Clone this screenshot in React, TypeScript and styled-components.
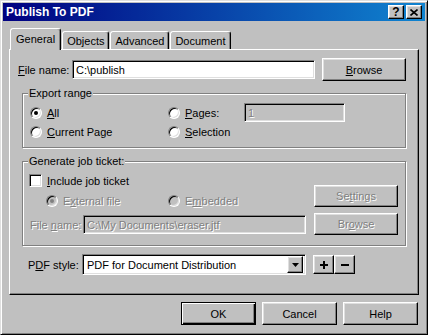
import React from "react";
import styled, { createGlobalStyle, css } from "styled-components";

const GlobalStyle = createGlobalStyle`
  html, body {
    margin: 0;
    padding: 0;
    background: #c0c0c0;
  }
  body {
    font-family: "Liberation Sans", Arial, sans-serif;
    font-size: 11px;
    color: #000;
  }
  * {
    box-sizing: border-box;
  }
`;

const raised = css`
  border: 1px solid;
  border-color: #fff #000 #000 #fff;
  box-shadow: inset -1px -1px #808080, inset 1px 1px #dfdfdf;
`;

const sunken = css`
  border: 1px solid;
  border-color: #808080 #fff #fff #808080;
  box-shadow: inset 1px 1px #000, inset -1px -1px #dfdfdf;
`;

const disabledText = css`
  color: #808080;
  text-shadow: 1px 1px #fff;
`;

const Window = styled.div`
  width: 428px;
  height: 335px;
  display: flex;
  flex-direction: column;
  background: #c0c0c0;
  border: 1px solid;
  border-color: #dfdfdf #000 #000 #dfdfdf;
  box-shadow: inset 1px 1px #fff, inset -1px -1px #808080;
  padding: 2px;
`;

const TitleBar = styled.div`
  height: 18px;
  display: flex;
  align-items: center;
  justify-content: space-between;
  padding: 0 3px 0 3px;
  background: linear-gradient(90deg, #000080, #1084d0);
  color: #fff;
  font-weight: bold;
  font-size: 12px;
`;

const CaptionButtons = styled.div`
  display: flex;
  gap: 2px;
`;

const CaptionButton = styled.div`
  width: 16px;
  height: 14px;
  background: #c0c0c0;
  ${raised};
  display: flex;
  align-items: center;
  justify-content: center;
  color: #000;
  font-size: 12px;
  font-weight: bold;
  line-height: 12px;
`;

const Content = styled.div`
  flex: 1;
  display: flex;
  flex-direction: column;
  padding: 7px 6px 0 6px;
`;

const TabStrip = styled.div`
  display: flex;
  align-items: flex-end;
  height: 21px;
  padding-left: 1px;
`;

const Tab = styled.div<{ $active?: boolean }>`
  height: 18px;
  padding: 0 4px;
  display: flex;
  align-items: center;
  background: #c0c0c0;
  border: 1px solid;
  border-bottom: none;
  border-color: #fff #000 transparent #fff;
  border-radius: 3px 3px 0 0;
  box-shadow: inset -1px 0 #808080;
  margin-right: 1px;
  ${(p) =>
    p.$active &&
    css`
      position: relative;
      z-index: 1;
      height: 22px;
      margin-bottom: -1px;
      padding: 0 5px 2px 5px;
    `}
`;

const Panel = styled.div`
  height: 246px;
  display: flex;
  flex-direction: column;
  border: 1px solid;
  border-color: #fff #000 #000 #fff;
  box-shadow: inset -1px -1px #808080;
`;

const FileRow = styled.div`
  display: flex;
  align-items: center;
  height: 23px;
  margin: 8px 12px 0 8px;
`;

const Label = styled.span<{ $width: number; $disabled?: boolean }>`
  width: ${(p) => p.$width}px;
  flex: none;
  white-space: nowrap;
  ${(p) => p.$disabled && disabledText};
`;

const Field = styled.div<{ $width: number; $height?: number; $disabled?: boolean }>`
  width: ${(p) => p.$width}px;
  height: ${(p) => p.$height ?? 19}px;
  flex: none;
  display: flex;
  align-items: center;
  padding: 0 3px;
  white-space: nowrap;
  overflow: hidden;
  background: ${(p) => (p.$disabled ? "#c0c0c0" : "#fff")};
  ${sunken};
  ${(p) => p.$disabled && disabledText};
`;

const PushButton = styled.div<{ $width: number; $height: number; $default?: boolean; $disabled?: boolean }>`
  width: ${(p) => p.$width}px;
  height: ${(p) => p.$height}px;
  flex: none;
  display: flex;
  align-items: center;
  justify-content: center;
  background: #c0c0c0;
  ${raised};
  ${(p) =>
    p.$default &&
    css`
      border-color: #000;
      box-shadow: inset 1px 1px #fff, inset -1px -1px #000, inset -2px -2px #808080;
    `}
  ${(p) => p.$disabled && disabledText};
`;

const Group = styled.fieldset<{ $top: number }>`
  margin: ${(p) => p.$top}px 12px 0 12px;
  padding: 0;
  min-width: 0;
  border: 1px solid #808080;
  box-shadow: inset 1px 1px #fff, 1px 1px #fff;
`;

const Legend = styled.legend`
  margin-left: 5px;
  padding: 0 1px;
  line-height: 13px;
  background: #c0c0c0;
`;

const RangeGrid = styled.div`
  display: grid;
  grid-template-columns: 138px 1fr;
  grid-auto-rows: 19px;
  align-items: center;
  padding: 3px 8px 6px 7px;
`;

const PagesCell = styled.div`
  display: flex;
  align-items: center;
`;

const Option = styled.div<{ $width?: number; $disabled?: boolean }>`
  display: flex;
  align-items: center;
  gap: 5px;
  white-space: nowrap;
  ${(p) => p.$width && `width: ${p.$width}px;`}
  ${(p) => p.$disabled && disabledText};
`;

const Radio = styled.span<{ $checked?: boolean; $disabled?: boolean }>`
  width: 12px;
  height: 12px;
  flex: none;
  border-radius: 50%;
  border: 1px solid;
  border-color: #808080 #fff #fff #808080;
  box-shadow: inset 1px 1px #000, inset -1px -1px #dfdfdf;
  background: ${(p) => (p.$disabled ? "#c0c0c0" : "#fff")};
  display: flex;
  align-items: center;
  justify-content: center;
  &::after {
    content: "";
    width: 4px;
    height: 4px;
    border-radius: 50%;
    background: ${(p) => (p.$disabled ? "#808080" : "#000")};
    display: ${(p) => (p.$checked ? "block" : "none")};
  }
`;

const Checkbox = styled.span`
  width: 13px;
  height: 13px;
  flex: none;
  background: #fff;
  ${sunken};
`;

const TicketBody = styled.div`
  display: flex;
  align-items: flex-end;
  gap: 8px;
  padding: 6px 9px 10px 6px;
`;

const TicketLeft = styled.div`
  flex: 1;
  display: flex;
  flex-direction: column;
  margin-bottom: 1px;
`;

const TicketRight = styled.div`
  display: flex;
  flex-direction: column;
  gap: 6px;
`;

const EmbedRow = styled.div`
  display: grid;
  grid-template-columns: 122px 1fr;
  padding-left: 17px;
  margin: 8px 0 8px 0;
`;

const SubFileRow = styled.div`
  display: flex;
  align-items: center;
  padding-left: 1px;
`;

const StyleRow = styled.div`
  display: flex;
  align-items: center;
  height: 21px;
  margin: 8px 0 0 18px;
`;

const Combo = styled.div`
  width: 224px;
  height: 21px;
  display: flex;
  align-items: center;
  justify-content: space-between;
  background: #fff;
  ${sunken};
  padding: 2px 2px 2px 4px;
`;

const ComboButton = styled.div`
  width: 16px;
  height: 17px;
  display: flex;
  align-items: center;
  justify-content: center;
  background: #c0c0c0;
  ${raised};
`;

const ToolButtons = styled.div`
  display: flex;
  margin-left: 7px;
`;

const ToolButton = styled.div`
  width: 21px;
  height: 19px;
  display: flex;
  align-items: center;
  justify-content: center;
  background: #c0c0c0;
  ${raised};
`;

const ButtonBar = styled.div`
  display: flex;
  justify-content: flex-end;
  gap: 6px;
  margin-top: 7px;
  padding-right: 1px;
`;

const U = styled.span`
  text-decoration: underline;
`;

export default function App() {
  return (
    <>
      <GlobalStyle />
      <Window>
        <TitleBar>
          <span>Publish To PDF</span>
          <CaptionButtons>
            <CaptionButton>?</CaptionButton>
            <CaptionButton>
              <svg width="8" height="7" viewBox="0 0 8 7">
                <path d="M0.5 0.5 L7.5 6.5 M7.5 0.5 L0.5 6.5" stroke="#000" strokeWidth="1.6" />
              </svg>
            </CaptionButton>
          </CaptionButtons>
        </TitleBar>
        <Content>
          <TabStrip>
            <Tab $active>General</Tab>
            <Tab>Objects</Tab>
            <Tab>Advanced</Tab>
            <Tab>Document</Tab>
          </TabStrip>
          <Panel>
            <FileRow>
              <Label $width={54}>
                <U>F</U>ile name:
              </Label>
              <Field $width={243}>C:\publish</Field>
              <PushButton $width={84} $height={23} style={{ marginLeft: 7 }}>
                <span>
                  <U>B</U>rowse
                </span>
              </PushButton>
            </FileRow>

            <Group $top={6}>
              <Legend>Export range</Legend>
              <RangeGrid>
                <Option>
                  <Radio $checked />
                  <span>
                    <U>A</U>ll
                  </span>
                </Option>
                <PagesCell>
                  <Option $width={76}>
                    <Radio />
                    <span>
                      <U>P</U>ages:
                    </span>
                  </Option>
                  <Field $width={101} $disabled>
                    1
                  </Field>
                </PagesCell>
                <Option>
                  <Radio />
                  <span>
                    <U>C</U>urrent Page
                  </span>
                </Option>
                <Option>
                  <Radio />
                  <span>
                    <U>S</U>election
                  </span>
                </Option>
              </RangeGrid>
            </Group>

            <Group $top={7}>
              <Legend>Generate job ticket:</Legend>
              <TicketBody>
                <TicketLeft>
                  <Option>
                    <Checkbox />
                    <span>
                      <U>I</U>nclude job ticket
                    </span>
                  </Option>
                  <EmbedRow>
                    <Option $disabled>
                      <Radio $checked $disabled />
                      <span>
                        E<U>x</U>ternal file
                      </span>
                    </Option>
                    <Option $disabled>
                      <Radio $disabled />
                      <span>
                        E<U>m</U>bedded
                      </span>
                    </Option>
                  </EmbedRow>
                  <SubFileRow>
                    <Label $width={53} $disabled>
                      File <U>n</U>ame:
                    </Label>
                    <Field $width={223} $disabled>
                      C:\My Documents\eraser.jtf
                    </Field>
                  </SubFileRow>
                </TicketLeft>
                <TicketRight>
                  <PushButton $width={84} $height={22} $disabled>
                    <span>
                      Se<U>t</U>tings
                    </span>
                  </PushButton>
                  <PushButton $width={84} $height={22} $disabled>
                    <span>
                      Br<U>o</U>wse
                    </span>
                  </PushButton>
                </TicketRight>
              </TicketBody>
            </Group>

            <StyleRow>
              <Label $width={54}>
                P<U>D</U>F style:
              </Label>
              <Combo>
                <span>PDF for Document Distribution</span>
                <ComboButton>
                  <svg width="7" height="4" viewBox="0 0 7 4">
                    <path d="M0 0 H7 L3.5 4 Z" fill="#000" />
                  </svg>
                </ComboButton>
              </Combo>
              <ToolButtons>
                <ToolButton>
                  <svg width="8" height="8" viewBox="0 0 8 8">
                    <rect x="3" y="0" width="2" height="8" fill="#000" />
                    <rect x="0" y="3" width="8" height="2" fill="#000" />
                  </svg>
                </ToolButton>
                <ToolButton>
                  <svg width="8" height="8" viewBox="0 0 8 8">
                    <rect x="0" y="3" width="8" height="2" fill="#000" />
                  </svg>
                </ToolButton>
              </ToolButtons>
            </StyleRow>
          </Panel>
          <ButtonBar>
            <PushButton $width={75} $height={23} $default>
              OK
            </PushButton>
            <PushButton $width={75} $height={23}>
              Cancel
            </PushButton>
            <PushButton $width={75} $height={23}>
              Help
            </PushButton>
          </ButtonBar>
        </Content>
      </Window>
    </>
  );
}
